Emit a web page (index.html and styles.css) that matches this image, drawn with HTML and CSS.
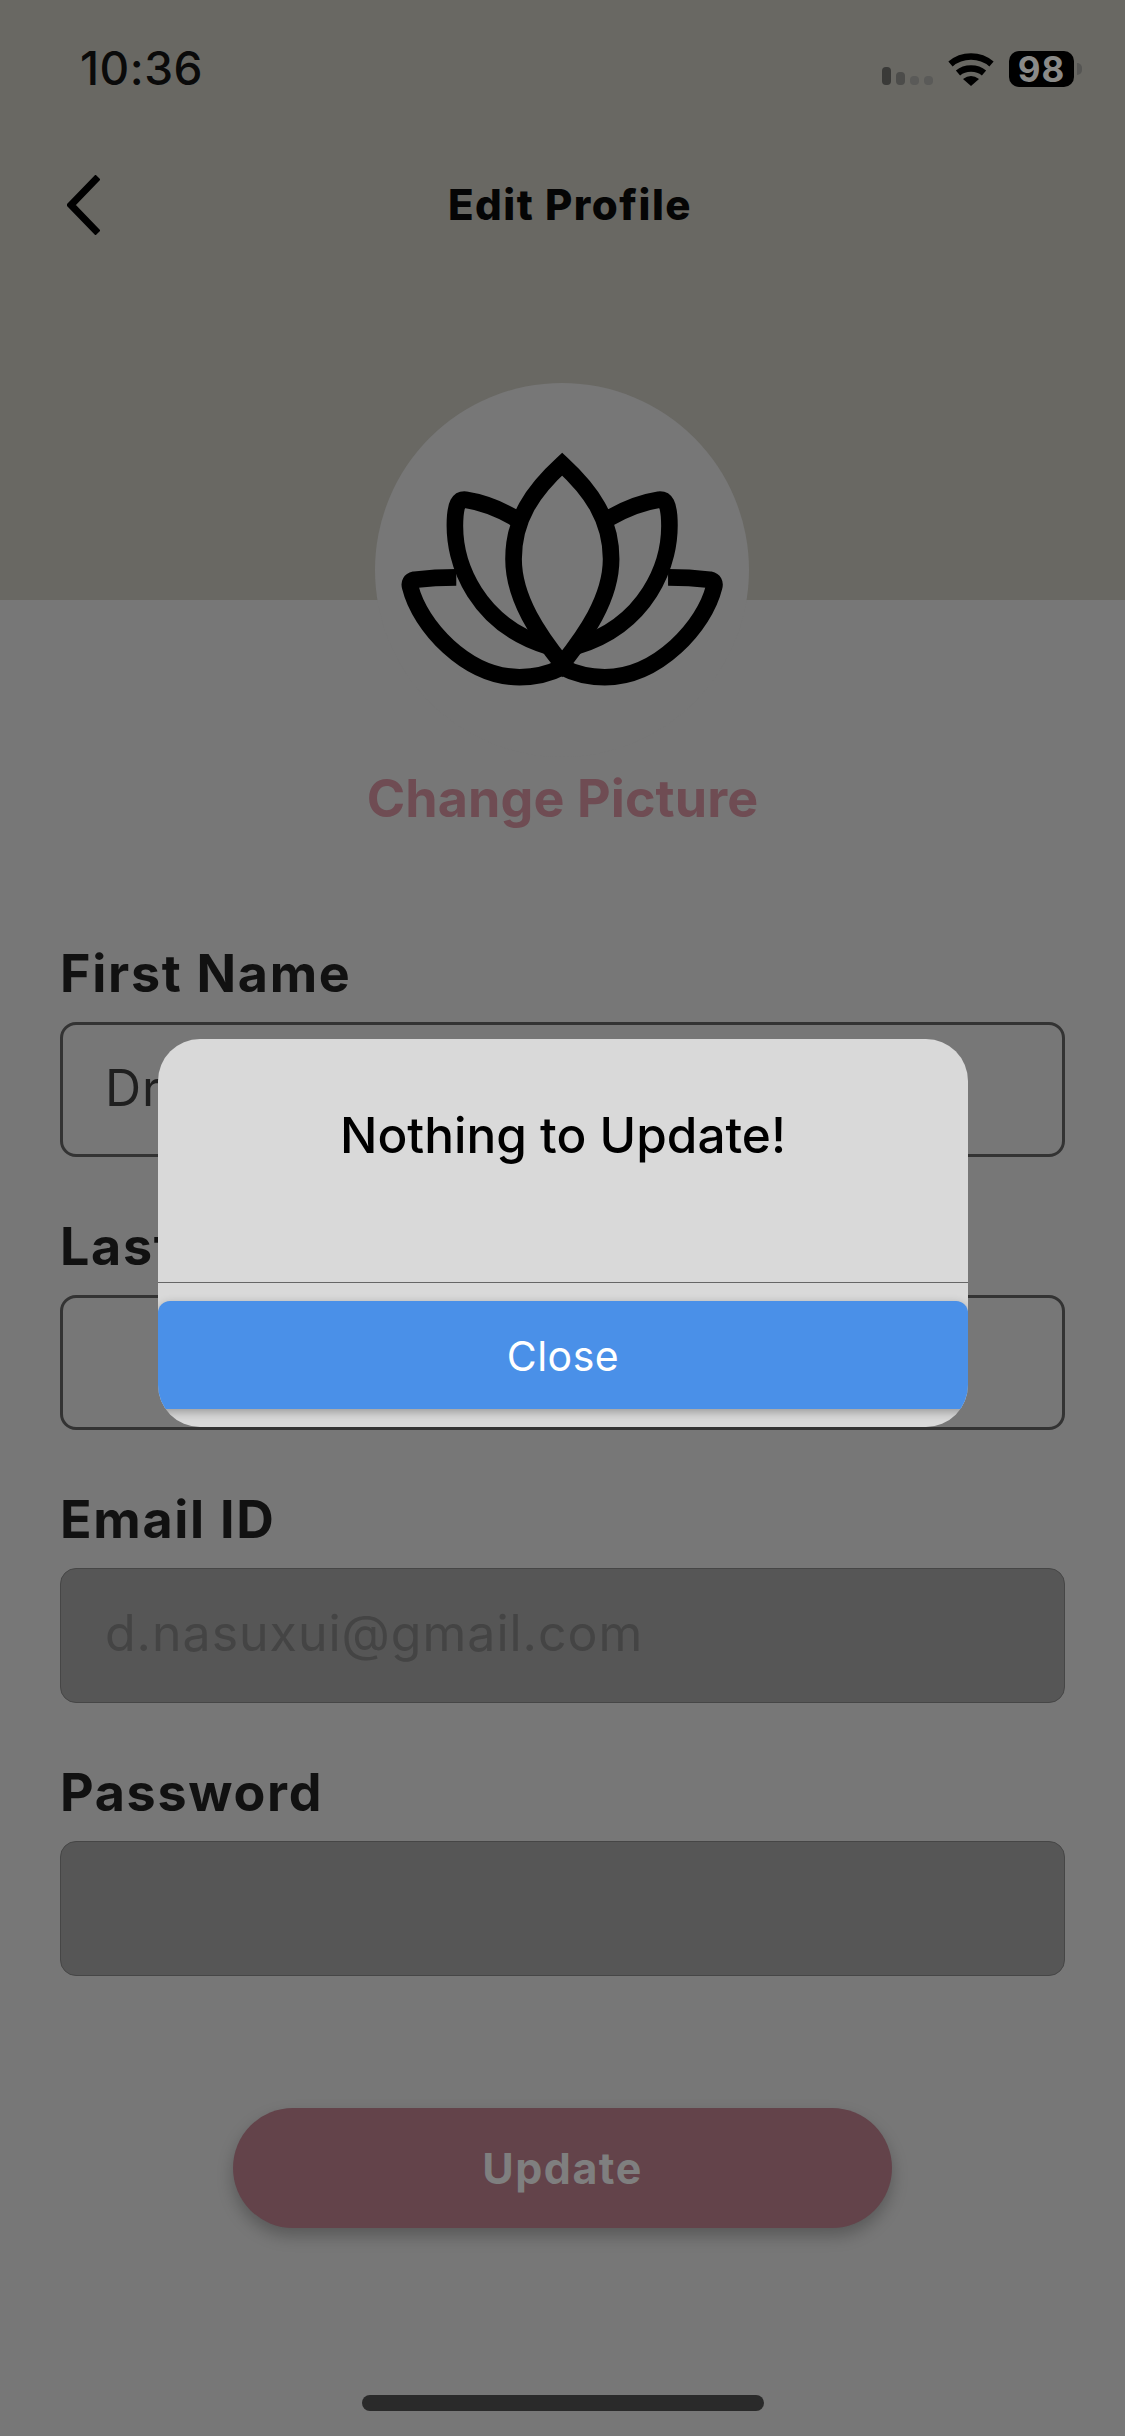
FILE: index.html
```html
<!DOCTYPE html>
<html lang="en">
<head>
<meta charset="utf-8">
<title>Edit Profile</title>
<link rel="stylesheet" href="styles.css">
</head>
<body>
<div class="screen">
  <header class="hero">
    <div class="status">
      <span class="time">10:36</span>
      <div class="status-icons">
        <div class="signal"><i class="b1"></i><i class="b2"></i><i class="b3"></i><i class="b4"></i></div>
        <svg class="wifi" viewBox="0 0 46 33"><path class="wifi-arc" d="M2.5 11C14 1 32 1 43.5 11"/><path class="wifi-arc" d="M10 20C17 14 29 14 36 20"/><path class="wifi-dot" d="M15 26Q23 20 31 26L23 33Z"/></svg>
        <div class="battery"><span class="battery-body">98</span><span class="battery-nub"></span></div>
      </div>
    </div>
    <nav class="nav">
      <svg class="back" viewBox="0 0 33 60"><path d="M31 2L4 30L31 58"/></svg>
      <h1 class="title">Edit Profile</h1>
    </nav>
  </header>
  <section class="avatar">
    <div class="avatar-circle">
      <svg class="lotus" viewBox="190 285 955 690">
        <path d="M668 315C580 395 522 480 522 600C522 720 600 830 668 915C735 830 815 720 815 600C815 480 755 395 668 315Z"/>
        <path d="M528 478C480 450 430 430 378 422C355 420 350 440 347 470C335 620 420 800 625 862"/>
        <path d="M808 478C856 450 906 430 958 422C981 420 986 440 989 470C1001 620 916 800 711 862"/>
        <path d="M350 655C300 655 260 658 225 662C212 665 208 672 212 685C240 800 380 955 540 955C590 955 630 945 668 925C706 945 746 955 796 955C956 955 1096 800 1124 685C1128 672 1124 665 1111 662C1076 658 1036 655 986 655"/>
      </svg>
    </div>
    <a class="change">Change Picture</a>
  </section>
  <form class="form">
    <div class="field"><label class="label">First Name</label><div class="input">Dr</div></div>
    <div class="field"><label class="label">Last Name</label><div class="input"></div></div>
    <div class="field"><label class="label">Email ID</label><div class="input disabled">d.nasuxui@gmail.com</div></div>
    <div class="field"><label class="label">Password</label><div class="input disabled"></div></div>
  </form>
  <div class="actions"><button class="update" type="button">Update</button></div>
  <div class="home"></div>
  <div class="modal">
    <div class="modal-body">Nothing to Update!</div>
    <div class="modal-foot"><button class="close" type="button">Close</button></div>
  </div>
</div>
</body>
</html>
```
FILE: styles.css
```css
* { box-sizing: border-box; }
html, body { margin: 0; padding: 0; }
body { width: 1125px; height: 2436px; overflow: hidden; background: #777777; font-family: "Inter", "Liberation Sans", sans-serif; }
.screen { position: relative; width: 1125px; height: 2436px; background: #777777; display: flex; flex-direction: column; }

.hero { height: 600px; background: #696863; flex: none; }
.status { height: 175px; padding: 44px 43px 0 80px; display: flex; justify-content: space-between; align-items: flex-start; }
.time { font-size: 46px; line-height: 48px; font-weight: 500; color: #0a0a0a; letter-spacing: 0.5px; }
.status-icons { display: flex; align-items: flex-start; margin-top: 7px; }
.signal { display: flex; align-items: flex-end; gap: 5px; height: 34px; width: 51px; margin-right: 15px; }
.signal i { display: block; width: 9px; border-radius: 4px; }
.b1 { height: 18px; background: #3a3a38; }
.b2 { height: 13px; background: #4c4c4a; }
.b3 { height: 9px; background: #5a5a58; }
.b4 { height: 9px; background: #5a5a58; }
.wifi { width: 46px; height: 33px; margin: 2px 15px 0 0; }
.wifi-arc { fill: none; stroke: #000; stroke-width: 6.5; }
.wifi-dot { fill: #000; }
.battery { display: flex; align-items: center; height: 36px; }
.battery-body { width: 65px; height: 36px; background: #000; border-radius: 10px; color: #8a8a88; font-size: 35px; font-weight: 700; line-height: 36px; text-align: center; letter-spacing: 1px; }
.battery-nub { width: 5px; height: 12px; margin-left: 3px; background: #555553; border-radius: 0 5px 5px 0; }

.nav { display: flex; align-items: center; height: 60px; padding: 0 85px 0 67px; }
.back { width: 33px; height: 60px; flex: none; }
.back path { fill: none; stroke: #000; stroke-width: 7; }
.title { flex: 1; margin: 0; text-align: center; font-size: 42px; line-height: 60px; font-weight: 800; color: #050505; letter-spacing: 1.5px; }

.avatar { position: relative; height: 227px; flex: none; display: flex; justify-content: center; align-items: flex-end; }
.avatar-circle { position: absolute; left: 375px; top: -217px; width: 374px; height: 374px; border-radius: 50%; background: #777777; }
.lotus { position: absolute; left: 28px; top: 0; width: 318px; height: 230px; margin-top: 71px; overflow: visible; }
.lotus path { fill: none; stroke: #000; stroke-width: 50; stroke-linejoin: miter; }
.change { position: relative; font-size: 52px; line-height: 56px; font-weight: 700; color: #6f4c53; letter-spacing: 0.1px; }

.form { display: flex; flex-direction: column; gap: 62px; padding: 0 60px; margin-top: 119px; }
.field { display: flex; flex-direction: column; }
.label { font-size: 52px; line-height: 56px; height: 76px; font-weight: 700; color: #111111; letter-spacing: 1.7px; }
.input { height: 135px; border: 3px solid #333333; border-radius: 16px; padding: 0 42px; font-size: 50px; line-height: 127px; color: #1f1f1f; letter-spacing: 1px; }
.input.disabled { background: #565656; border: 1px solid #464646; color: #444444; line-height: 129px; padding: 0 44px; }

.actions { display: flex; justify-content: center; margin-top: 132px; }
.update { width: 659px; height: 120px; border: 0; border-radius: 60px; background: #63434a; color: #7f7f7f; font-family: inherit; font-size: 43px; font-weight: 700; letter-spacing: 1.5px; box-shadow: 0 8px 16px rgba(0,0,0,.25); }
.home { width: 402px; height: 16px; margin: 167px auto 0; background: #2a2a2a; border-radius: 8px; }

.modal { position: absolute; left: 158px; top: 1039px; width: 810px; height: 388px; background: #d9d9d9; border-radius: 42px; overflow: hidden; display: flex; flex-direction: column; }
.modal-body { height: 244px; border-bottom: 1px solid #666666; padding-top: 66px; text-align: center; font-size: 49.5px; line-height: 60px; font-weight: 550; color: #000; flex: none; }
.modal-foot { padding-top: 18px; }
.close { display: block; width: 100%; height: 108px; border: 0; padding-top: 2px; border-radius: 12px 12px 0 0; background: #4a90e8; color: #fff; font-family: inherit; font-size: 41px; font-weight: 400; letter-spacing: 0.5px; box-shadow: 0 3px 10px rgba(0,0,0,.3); }
```
